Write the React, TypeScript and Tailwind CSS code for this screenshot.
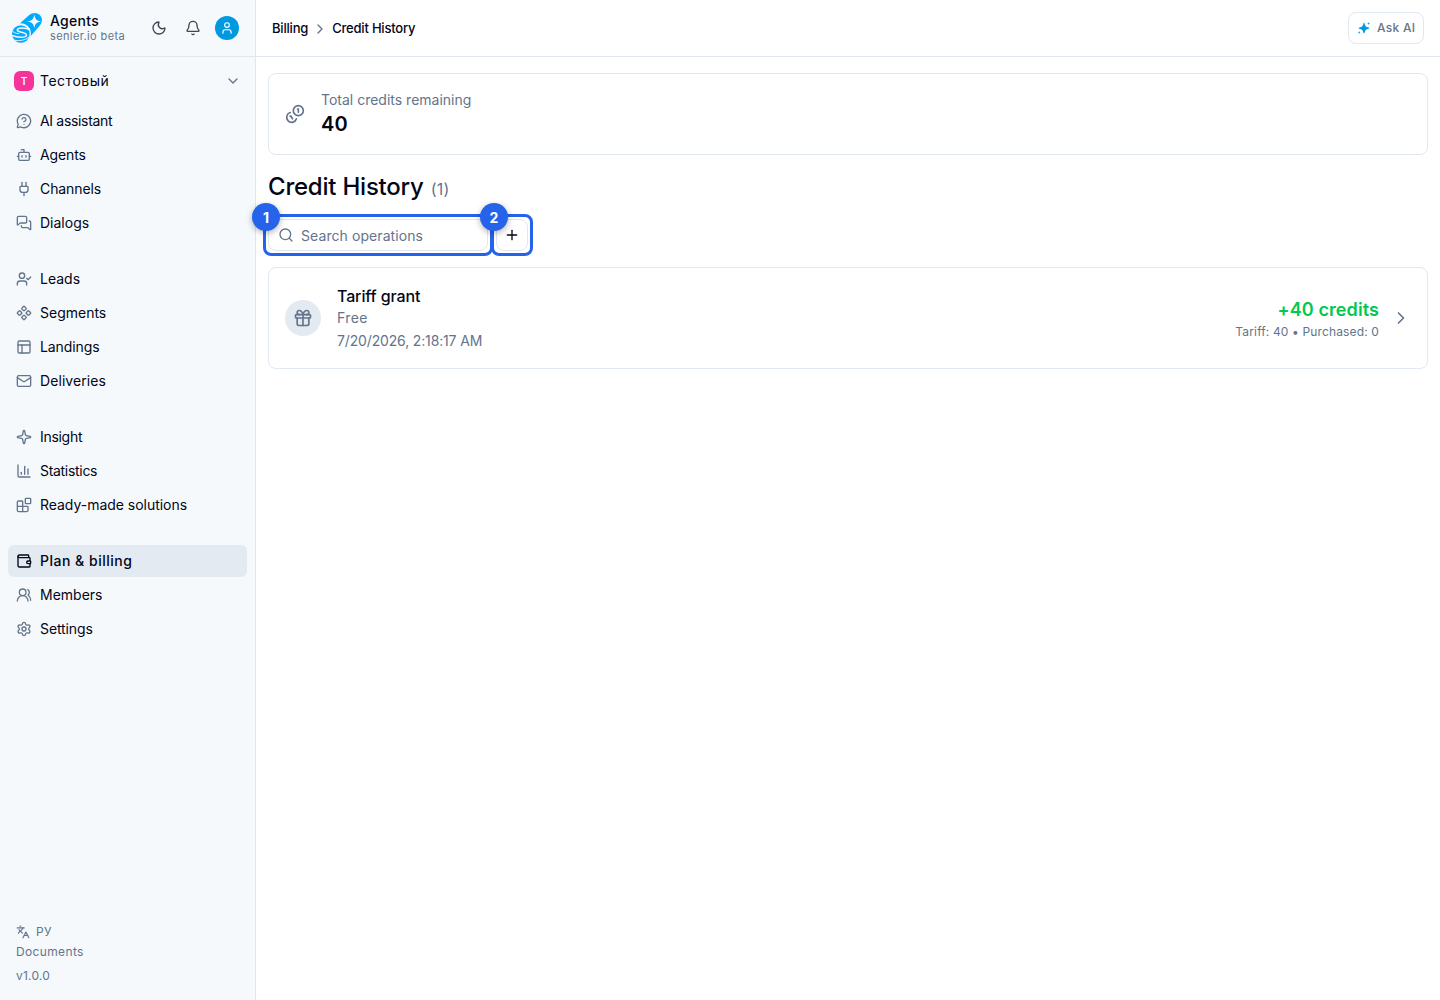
import React from 'react';
import {
    Bell,
    Blocks,
    Bot,
    ChartColumn,
    ChevronDown,
    ChevronRight,
    Component,
    Gift,
    Languages,
    Mail,
    MessageCircleQuestionMark,
    MessagesSquare,
    Moon,
    PanelsTopLeft,
    Plug,
    Plus,
    Search,
    Settings,
    Sparkle,
    User,
    UserCheck,
    UsersRound,
    Wallet,
} from 'lucide-react';

const navGroups = [
    [
        { name: 'AI assistant', icon: MessageCircleQuestionMark, tracking: 'tracking-[-0.33px]' },
        { name: 'Agents', icon: Bot, tracking: 'tracking-[-0.1px]' },
        { name: 'Channels', icon: Plug, tracking: 'tracking-[-0.1px]' },
        { name: 'Dialogs', icon: MessagesSquare, tracking: '' },
    ],
    [
        { name: 'Leads', icon: UserCheck, tracking: '' },
        { name: 'Segments', icon: Component, tracking: '' },
        { name: 'Landings', icon: PanelsTopLeft, tracking: 'tracking-[-0.1px]' },
        { name: 'Deliveries', icon: Mail, tracking: 'tracking-[0.08px]' },
    ],
    [
        { name: 'Insight', icon: Sparkle, tracking: 'tracking-[-0.3px]' },
        { name: 'Statistics', icon: ChartColumn, tracking: 'tracking-[-0.3px]' },
        { name: 'Ready-made solutions', icon: Blocks, tracking: 'tracking-[-0.03px]' },
    ],
    [
        { name: 'Plan & billing', icon: Wallet, active: true, tracking: 'tracking-[0.5px]' },
        { name: 'Members', icon: UsersRound, tracking: '' },
        { name: 'Settings', icon: Settings, tracking: 'tracking-[-0.1px]' },
    ],
];

const Logo = () => (
    <svg width="32" height="32" viewBox="0 0 32 32" fill="none">
        <path d="M8 11.300 17 3.300C20.500.2 25 .2 27.800 3 30.700 6 30.700 10.300 27.600 13.800L18.600 24.200C20.300 17 15.500 11.500 8 11.300Z" fill="#00aaff" />
        <path d="M22.300 2.500C23 7.200 24.500 8.700 29.200 9.400 24.500 10.100 23 11.600 22.300 16.300 21.600 11.600 20.100 10.100 15.400 9.400 20.100 8.700 21.600 7.200 22.300 2.500Z" fill="#f5f9fc" />
        <circle cx="8.800" cy="21.800" r="9.600" fill="#f5f9fc" />
        <circle cx="8.800" cy="22" r="8.800" fill="#00aaff" />
        <path d="M18 17.800C13.500 15.300 5.500 15.500 5.300 18 5.200 20.800 14.500 19.800 14.500 23.200 14.300 25.800 5 25.800 0 23.300" stroke="#f5f9fc" strokeWidth="1.500" />
        <path d="M0 18.500C1 20.300 3.500 21.300 7 21.800M1 27.800C6 29.500 13.500 28.600 17.500 24.500" stroke="#f5f9fc" strokeWidth="0.900" />
    </svg>
);

const CoinsIcon = () => (
    <svg
        width="20"
        height="20"
        viewBox="0 0 24 24"
        fill="none"
        stroke="currentColor"
        strokeWidth="2"
        strokeLinecap="round"
        strokeLinejoin="round"
        className="text-[#64748b]"
    >
        <path d="M13.744 17.736a6 6 0 1 1-7.480-7.480" />
        <path d="M15 6h1v4" />
        <path d="m6.134 14.768.866-.5 2 3.464" />
        <circle cx="16" cy="8" r="6" />
    </svg>
);

const Sidebar = () => (
    <aside className="flex w-64 shrink-0 flex-col border-r border-[#dfe6ee] bg-[#f5f9fc]">
        <div className="flex h-[57px] items-center border-b border-[#dfe6ee] pl-3 pr-4">
            <Logo />
            <div className="ml-1.5 flex-1 pb-0.5">
                <div className="text-sm leading-[17px] font-medium tracking-[0.3px]">Agents</div>
                <div className="text-[11px] leading-[14px] tracking-[0.38px] text-[#64748b]">senler.io beta</div>
            </div>
            <div className="flex items-center">
                <Moon size={16} className="text-[#3f4654]" />
                <Bell size={16} className="ml-[18px] text-[#3f4654]" />
                <div className="ml-3.5 flex size-6 items-center justify-center rounded-full bg-[#0099e0] text-white">
                    <User size={14} />
                </div>
            </div>
        </div>

        <div className="flex h-12 items-center pl-3.5 pr-3.5">
            <div className="flex size-5 items-center justify-center rounded-md bg-[#f6339a] text-[10px] font-semibold text-white">T</div>
            <span className="ml-1.5 flex-1 text-sm tracking-[0.5px]">Тестовый</span>
            <ChevronDown size={16} className="text-[#64748b]" />
        </div>

        <nav className="flex flex-1 flex-col gap-6 px-2">
            {navGroups.map((group, idx) => (
                <ul key={idx} className="flex flex-col gap-0.5">
                    {group.map((item) => (
                        <li
                            key={item.name}
                            className={`flex h-8 items-center gap-2 rounded-md px-2 text-sm ${item.tracking} ${item.active ? 'bg-[#e3eaf1] font-medium' : ''}`}
                        >
                            <item.icon size={16} className={item.active ? 'text-[#020618]' : 'text-[#64748b]'} />
                            {item.name}
                        </li>
                    ))}
                </ul>
            ))}
        </nav>

        <div className="flex flex-col px-4 pb-[15px] text-xs tracking-[0.36px] text-[#64748b]">
            <div className="flex h-5 items-center gap-1.5">
                <Languages size={14} />
                РУ
            </div>
            <div className="h-5 leading-5">Documents</div>
            <div className="mt-[5px] leading-[18px] tracking-[0.2px]">v1.0.0</div>
        </div>
    </aside>
);

const Header = () => (
    <header className="flex h-[57px] items-center justify-between border-b border-[#dfe6ee] px-4">
        <div className="flex items-center gap-1 pt-px text-[13px] font-medium tracking-[-0.2px]">
            <span>Billing</span>
            <ChevronRight size={16} className="text-[#64748b]" />
            <span>Credit History</span>
        </div>
        <button className="flex h-8 w-[76px] items-center gap-1.5 rounded-lg border border-[#e2e8f0] px-2 text-xs font-medium tracking-[0.3px] whitespace-nowrap text-[#64748b]">
            <svg width="14" height="14" viewBox="0 0 14 14" fill="#0099e0" className="shrink-0">
                <path d="M7 1.800C7.300 1.800 7.500 2 7.600 2.400 8.200 5.200 8.900 5.900 11.700 6.500 12.500 6.700 12.500 7.500 11.700 7.700 8.900 8.300 8.200 9 7.600 11.800 7.400 12.500 6.600 12.500 6.400 11.800 5.800 9 5.100 8.300 2.300 7.700 1.500 7.500 1.500 6.700 2.300 6.500 5.100 5.900 5.800 5.200 6.400 2.400 6.500 2 6.700 1.800 7 1.800Z" />
                <path d="M11.600 1.100 12 2.200 13.100 2.600 12 3 11.600 4.100 11.200 3 10.100 2.600 11.200 2.200ZM2.200 10.100 2.600 11.200 3.700 11.600 2.600 12 2.200 13.100 1.800 12 .7 11.600 1.800 11.200Z" />
            </svg>
            Ask AI
        </button>
    </header>
);

const Marker = ({ label }: { label: string }) => (
    <span className="absolute -left-[17px] -top-[17px] z-10 flex size-7 items-center justify-center rounded-full bg-[#2563eb] pt-px text-sm font-bold text-white shadow-[0_2px_6px_rgba(0,0,0,0.3)]">
        {label}
    </span>
);

const Outline = () => (
    <div className="absolute -inset-1.5 rounded-lg border-3 border-[#2563eb]" />
);

const App = () => {
    return (
        <div className="flex h-screen bg-white font-['Inter',sans-serif] text-[#020618]">
            <Sidebar />
            <main className="min-w-0 flex-1">
                <Header />
                <div className="px-3 pt-4">
                    <section className="flex h-[82px] items-center gap-4 rounded-lg border border-[#e2e8f0] px-4">
                        <CoinsIcon />
                        <div>
                            <div className="text-sm leading-5 text-[#64748b]">Total credits remaining</div>
                            <div className="text-xl leading-7 font-semibold tracking-[0.2px]">40</div>
                        </div>
                    </section>

                    <h1 className="mt-4 flex items-baseline gap-[7px] text-2xl leading-8 font-medium tracking-[-0.22px]">
                        Credit History
                        <span className="text-base font-normal tracking-[0.2px] text-[#64748b]">(1)</span>
                    </h1>

                    <div className="mt-4 flex gap-2">
                        <div className="relative flex h-8 w-[220px] items-center rounded-lg border border-[#e2e8f0] pl-[9px] text-sm text-[#64748b]">
                            <Search size={16} />
                            <span className="ml-[7px] pt-0.5 tracking-[0.08px]">Search operations</span>
                            <Outline />
                            <Marker label="1" />
                        </div>
                        <div className="relative flex size-8 items-center justify-center rounded-lg border border-[#e2e8f0]">
                            <Plus size={16} />
                            <Outline />
                            <Marker label="2" />
                        </div>
                    </div>

                    <section className="mt-4 flex h-[102px] items-center rounded-lg border border-[#e2e8f0] px-4">
                        <div className="flex size-9 items-center justify-center rounded-full bg-[#e3eaf1] text-[#64748b]">
                            <Gift size={20} />
                        </div>
                        <div className="ml-4 flex-1 pt-0.5">
                            <div className="text-base leading-[22px] font-medium tracking-[-0.12px]">Tariff grant</div>
                            <div className="text-sm leading-[22px] tracking-[0.4px] text-[#64748b]">Free</div>
                            <div className="text-sm leading-6 tracking-[-0.15px] text-[#64748b]">7/20/2026, 2:18:17 AM</div>
                        </div>
                        <div className="text-right">
                            <div className="text-lg leading-7 font-semibold tracking-[0.1px] text-[#00c950]">+40 credits</div>
                            <div className="text-xs leading-4 tracking-[0.14px] text-[#64748b]">Tariff: 40 • Purchased: 0</div>
                        </div>
                        <ChevronRight size={20} className="ml-3 text-[#64748b]" />
                    </section>
                </div>
            </main>
        </div>
    );
};

export default App;
